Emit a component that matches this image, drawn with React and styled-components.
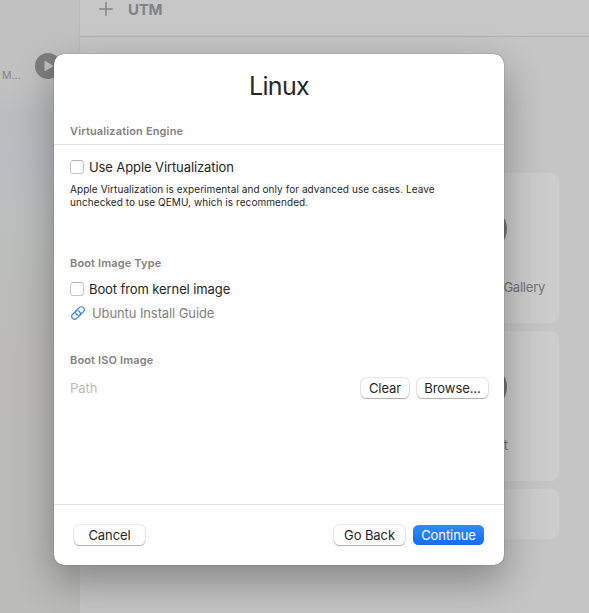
import React from "react";
import styled, { createGlobalStyle } from "styled-components";

const GlobalStyle = createGlobalStyle`
  * { box-sizing: border-box; }
  html, body { margin: 0; padding: 0; overflow: hidden; }
  body { font-family: Inter, "Liberation Sans", sans-serif; font-size: 13px; color: #262626; }
`;

const Window = styled.div`
  position: relative;
  display: flex;
  width: 589px;
  height: 613px;
  overflow: hidden;
  background: #c5c5c5;
`;

const Sidebar = styled.aside`
  width: 80px;
  flex: none;
  border-right: 1px solid #bababa;
  background: linear-gradient(180deg, #c1c1c1 0, #c1c1c1 85px, #babdbf 115px, #b9bdc2 165px, #bcbfbf 215px, #bcbeba 260px, #bcbbb7 350px, #bbbbb7 480px, #bbbbb8 613px);
`;

const MachineRow = styled.div`
  display: flex;
  align-items: flex-start;
  justify-content: space-between;
  width: 61px;
  padding: 53px 0 0 2px;
`;

const MachineName = styled.span`
  margin-top: 16px;
  font-size: 10.5px;
  line-height: 13px;
  color: #858585;
`;

const Main = styled.main`
  flex: 1;
`;

const Toolbar = styled.header`
  display: flex;
  align-items: flex-start;
  height: 37px;
  padding: 2px 0 0 19px;
  gap: 15px;
  border-bottom: 1px solid #b2b2b2;
  background: #c7c7c7;
  color: #838383;
`;

const WindowTitle = styled.h2`
  margin: -2px 0 0;
  font-size: 15px;
  line-height: 20px;
  font-weight: 700;
  letter-spacing: -0.3px;
`;

const Cards = styled.div`
  display: flex;
  flex-direction: column;
  gap: 8px;
  width: 150px;
  margin: 136px 0 0 329px;
`;

const Card = styled.section`
  display: flex;
  flex-direction: column;
  align-items: center;
  height: ${(p) => p.$height}px;
  padding-top: 33px;
  border-radius: 8px;
  background: #cccccc;
  color: #747474;
`;

const CardDisc = styled.div`
  width: 46px;
  height: 46px;
  border-radius: 50%;
  background: #747474;
`;

const CardLabel = styled.span`
  margin-top: 27px;
  line-height: 16px;
  white-space: nowrap;
  letter-spacing: -0.22px;
`;

const Dialog = styled.div`
  position: absolute;
  left: 54px;
  top: 54px;
  display: flex;
  flex-direction: column;
  width: 450px;
  height: 511px;
  border-radius: 10px;
  background: #fff;
  box-shadow: 0 0 1px rgba(0, 0, 0, 0.7), 0 16px 40px rgba(0, 0, 0, 0.33);
`;

const Title = styled.h1`
  height: 64px;
  margin: 0;
  padding-top: 17px;
  font-size: 25px;
  line-height: 30px;
  font-weight: 400;
  text-align: center;
  letter-spacing: -0.7px;
`;

const SectionTitle = styled.h3`
  height: 14px;
  margin: ${(p) => p.$top || 0}px 0 0 16px;
  font-size: 11px;
  line-height: 14px;
  font-weight: 600;
  color: #828282;
  letter-spacing: 0.15px;
`;

const Rule = styled.hr`
  width: 100%;
  height: 1px;
  margin: ${(p) => p.$top || 0}px 0 0;
  border: 0;
  background: #dfdfdf;
`;

const Option = styled.label`
  display: flex;
  align-items: center;
  gap: 5px;
  height: 18px;
  margin: ${(p) => p.$top}px 0 0 16px;
`;

const Checkbox = styled.input.attrs({ type: "checkbox" })`
  appearance: none;
  width: 14px;
  height: 14px;
  margin: 0;
  border: 1px solid #c6c6c6;
  border-top-color: #b4b4b4;
  border-radius: 3.5px;
  background: #fff;
`;

const Label = styled.span`
  line-height: 18px;
  letter-spacing: -0.1px;
`;

const Note = styled.p`
  margin: 7px 0 0 16px;
  font-size: 10px;
  line-height: 13px;
  letter-spacing: 0.07px;
  white-space: nowrap;
`;

const GuideLink = styled.a`
  display: flex;
  align-items: center;
  gap: 6px;
  height: 18px;
  margin: 6px 0 0 16px;
  color: #808080;
`;

const PathRow = styled.div`
  display: flex;
  align-items: center;
  gap: 8px;
  height: 22px;
  margin: 10px 16px 0 16px;
`;

const Path = styled.span`
  flex: 1;
  color: #bcbcbc;
  line-height: 18px;
`;

const Button = styled.button`
  width: ${(p) => p.$width}px;
  height: 20px;
  padding: 0;
  border: 0;
  border-radius: 5.5px;
  font: inherit;
  line-height: 19px;
  white-space: nowrap;
  letter-spacing: -0.08px;
  color: ${(p) => (p.$primary ? "#fff" : "#262626")};
  background: ${(p) => (p.$primary ? "linear-gradient(#328bfa, #116ef5)" : "#fff")};
  box-shadow: ${(p) => (p.$primary ? "none" : "0 0 0 1px rgba(0,0,0,.09), 0 1px 1px rgba(0,0,0,.26)")};
`;

const Footer = styled.footer`
  display: flex;
  align-items: center;
  height: 61px;
  margin-top: auto;
  padding: 0 20px;
  border-top: 1px solid #dfdfdf;
`;

const Spacer = styled.div`
  flex: 1;
`;

const Gap = styled.div`
  width: 8px;
`;

const PlayIcon = () => (
  <svg width="26" height="26" viewBox="0 0 26 26">
    <circle cx="13" cy="13" r="13" fill="#7e7e7e" />
    <path d="M9.5 8.2v9.6c0 .4.4.6.7.4l7.6-4.8c.3-.2.3-.6 0-.8l-7.6-4.8c-.3-.2-.7 0-.7.4z" fill="#c1c1c1" />
  </svg>
);

const PlusIcon = () => (
  <svg width="14" height="14" viewBox="0 0 14 14" fill="none" stroke="currentColor" strokeWidth="1.4" strokeLinecap="round">
    <path d="M7 .8v12.4M.8 7h12.4" />
  </svg>
);

const LinkIcon = () => (
  <svg width="16" height="16" viewBox="0 0 16 16" fill="none" stroke="#3a83ed" strokeWidth="1.2" strokeLinecap="round">
    <path d="M6.1 5.9 2.6 9.3a2.85 2.85 0 0 0 4.1 4.1L9.5 10.7A2.85 2.85 0 0 0 7.9 5.8" />
    <path d="M9.9 10.1 13.4 6.7a2.85 2.85 0 0 0-4.1-4.1L6.5 5.3A2.85 2.85 0 0 0 8.1 10.2" />
  </svg>
);

export default function App() {
  return (
    <>
      <GlobalStyle />
      <Window>
        <Sidebar>
          <MachineRow>
            <MachineName>M...</MachineName>
            <PlayIcon />
          </MachineRow>
        </Sidebar>
        <Main>
          <Toolbar>
            <PlusIcon />
            <WindowTitle>UTM</WindowTitle>
          </Toolbar>
          <Cards>
            <Card $height={150}>
              <CardDisc />
              <CardLabel>Browse UTM Gallery</CardLabel>
            </Card>
            <Card $height={150}>
              <CardDisc />
              <CardLabel>Support</CardLabel>
            </Card>
            <Card $height={50} />
          </Cards>
        </Main>
        <Dialog role="dialog">
          <Title>Linux</Title>
          <SectionTitle $top={6}>Virtualization Engine</SectionTitle>
          <Rule $top={6} />
          <Option $top={13}>
            <Checkbox />
            <Label>Use Apple Virtualization</Label>
          </Option>
          <Note>
            Apple Virtualization is experimental and only for advanced use cases. Leave
            <br />
            unchecked to use QEMU, which is recommended.
          </Note>
          <SectionTitle $top={47}>Boot Image Type</SectionTitle>
          <Option $top={10}>
            <Checkbox />
            <Label>Boot from kernel image</Label>
          </Option>
          <GuideLink>
            <LinkIcon />
            <Label>Ubuntu Install Guide</Label>
          </GuideLink>
          <SectionTitle $top={31}>Boot ISO Image</SectionTitle>
          <PathRow>
            <Path>Path</Path>
            <Button $width={48}>Clear</Button>
            <Button $width={71}>Browse...</Button>
          </PathRow>
          <Footer>
            <Button $width={71}>Cancel</Button>
            <Spacer />
            <Button $width={71}>Go Back</Button>
            <Gap />
            <Button $width={71} $primary>Continue</Button>
          </Footer>
        </Dialog>
      </Window>
    </>
  );
}
